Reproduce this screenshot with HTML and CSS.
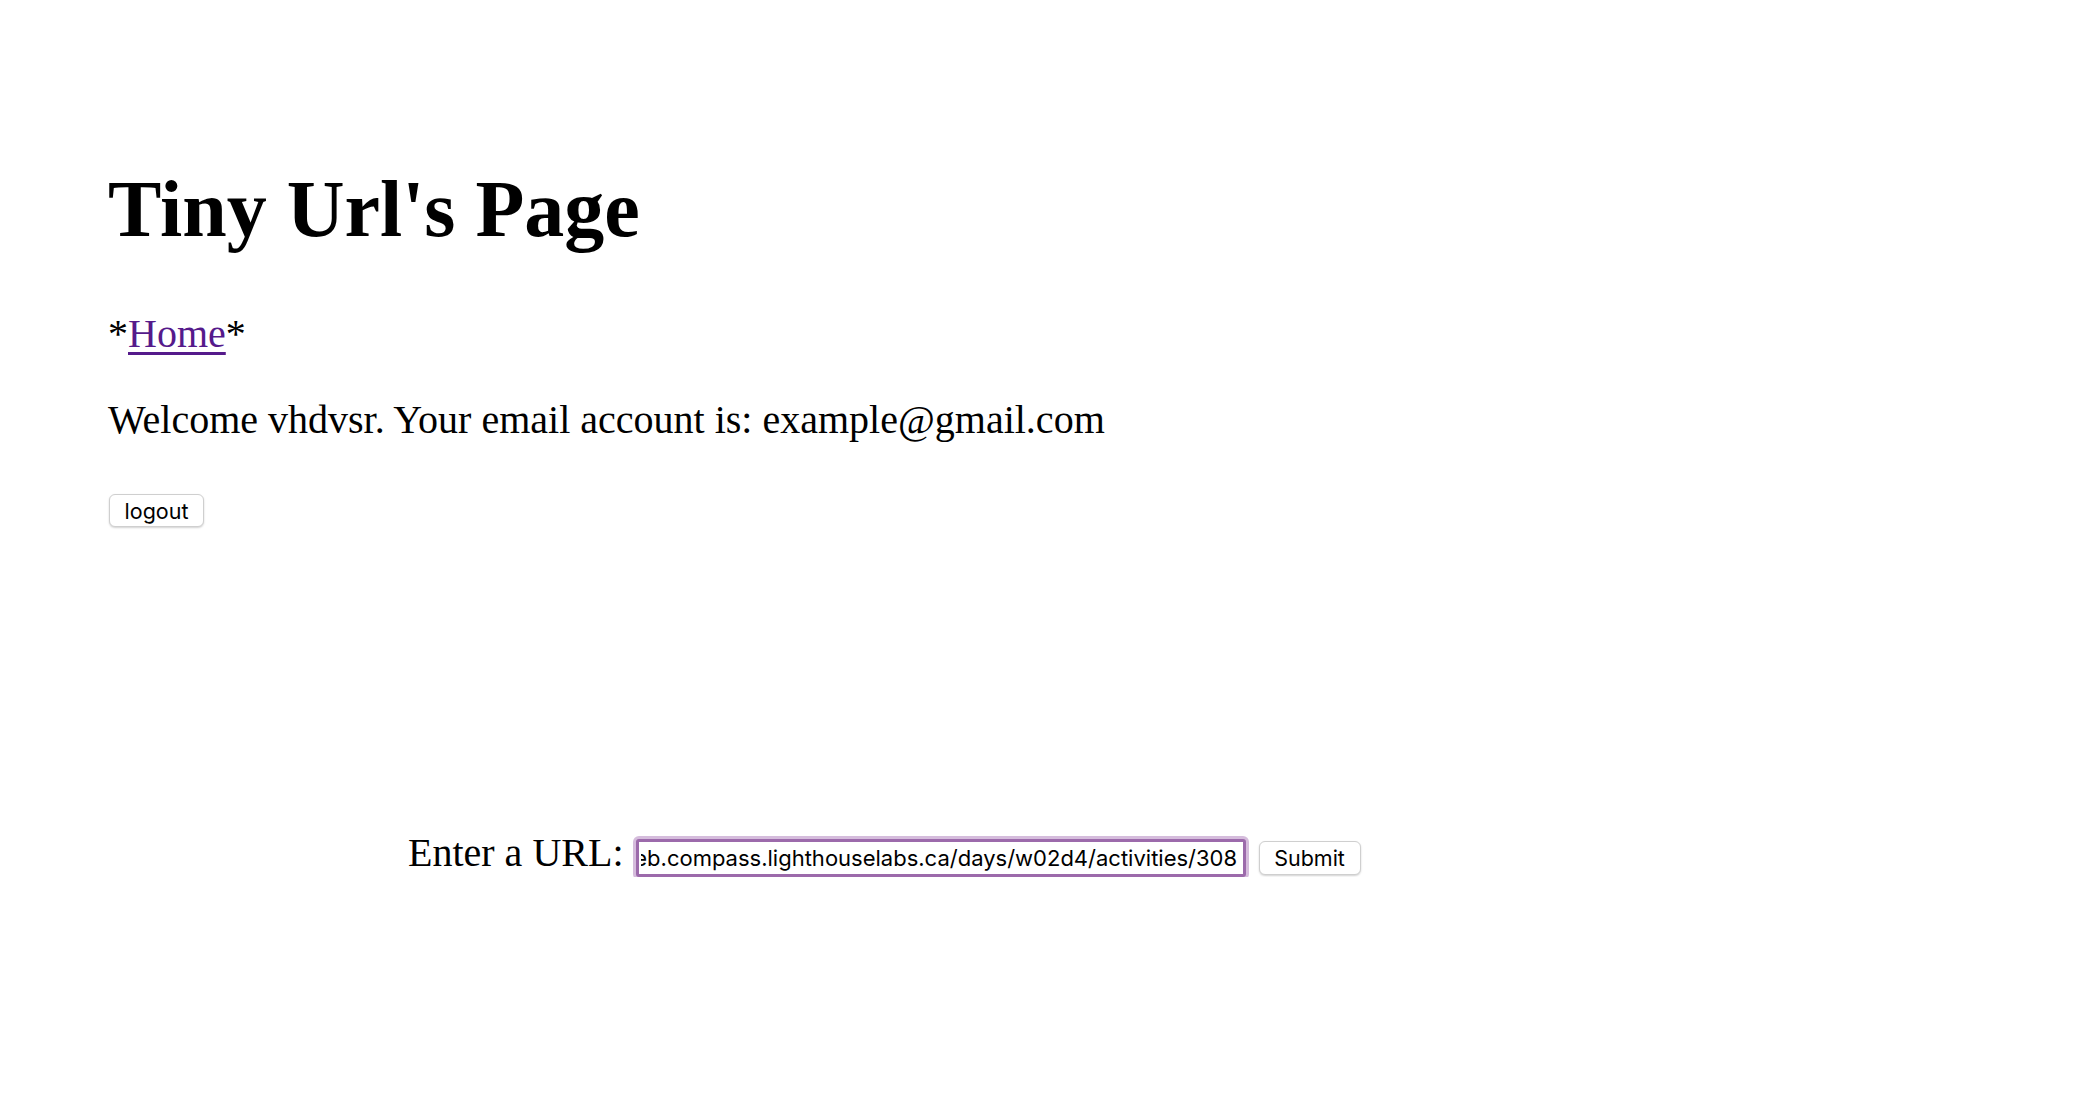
FILE: index.html
```html
<!DOCTYPE html>
<html lang="en">
<head>
<meta charset="utf-8">
<title>TinyApp</title>
<link rel="stylesheet" href="styles.css">
</head>
<body>
<header class="top">
  <h1 class="title">Tiny Url's Page</h1>
  <p class="nav">*<a href="#" class="nav-link">Home</a>*</p>
  <p class="welcome">Welcome vhdvsr. Your email account is: example@gmail.com</p>
  <form class="logout-form"><button class="btn btn-logout" type="button">logout</button></form>
</header>
<main class="main">
  <form class="url-form">
    <label class="url-label" for="longURL">Enter a URL:</label>
    <input class="url-input" id="longURL" type="text" value="https://web.compass.lighthouselabs.ca/days/w02d4/activities/308">
    <button class="btn btn-submit" type="button">Submit</button>
  </form>
</main>
<script src="script.js"></script>
</body>
</html>
```

FILE: styles.css
```css
html, body {
  margin: 0;
  padding: 0;
  background: #ffffff;
}
body {
  font-family: "Liberation Serif", "Times New Roman", serif;
  color: #000000;
}
.top {
  padding: 169px 0 0 108px;
}
.title {
  margin: 0;
  font-size: 80px;
  line-height: 80px;
  font-weight: bold;
}
.nav {
  margin: 65px 0 0;
  font-size: 40px;
  line-height: 40px;
}
.nav-link {
  color: #551a8b;
  text-decoration: underline;
  text-decoration-thickness: 3px;
  text-underline-offset: 5px;
}
.welcome {
  margin: 46px 0 0;
  font-size: 40px;
  line-height: 40px;
}
.logout-form {
  margin: 54px 0 0;
  display: flex;
}
.btn {
  font-family: Inter, "Noto Sans", sans-serif;
  font-size: 21.5px;
  color: #000000;
  background: #ffffff;
  border: 1px solid #cfcfcf;
  border-radius: 6px;
  box-shadow: 0 1px 2px rgba(0, 0, 0, 0.18);
  box-sizing: border-box;
  padding: 0;
  display: inline-flex;
  align-items: center;
  justify-content: center;
}
.btn-logout {
  width: 95px;
  height: 33px;
  margin-left: 1px;
}
.main {
  padding: 306px 0 0 408px;
}
.url-form {
  display: flex;
  align-items: baseline;
}
.url-label {
  font-size: 40px;
  line-height: 40px;
}
.url-input {
  box-sizing: border-box;
  width: 610px;
  height: 38px;
  margin-left: 12px;
  padding: 0 5px 0 2px;
  font-family: Inter, "Noto Sans", sans-serif;
  font-size: 22px;
  color: #000000;
  background: #ffffff;
  border: 3px solid #9c6aab;
  border-radius: 3px;
  box-shadow: 0 0 0 3px #d5bcdc;
  outline: none;
}
.btn-submit {
  width: 102px;
  height: 34px;
  margin-left: 13px;
}
```

FILE: script.js
```js
document.querySelectorAll('.url-input').forEach(function (el) {
  el.scrollLeft = el.scrollWidth;
});
```
